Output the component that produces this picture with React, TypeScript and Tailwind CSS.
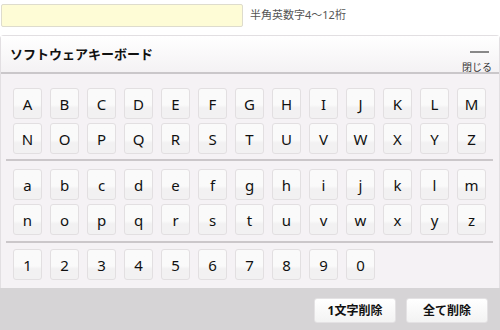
import React from 'react';

const upperRows = [
  ['A', 'B', 'C', 'D', 'E', 'F', 'G', 'H', 'I', 'J', 'K', 'L', 'M'],
  ['N', 'O', 'P', 'Q', 'R', 'S', 'T', 'U', 'V', 'W', 'X', 'Y', 'Z'],
];
const lowerRows = [
  ['a', 'b', 'c', 'd', 'e', 'f', 'g', 'h', 'i', 'j', 'k', 'l', 'm'],
  ['n', 'o', 'p', 'q', 'r', 's', 't', 'u', 'v', 'w', 'x', 'y', 'z'],
];
const numberRows = [['1', '2', '3', '4', '5', '6', '7', '8', '9', '0']];

const Key = ({ label }: { label: string }) => (
  <button className="w-[29px] h-[31px] rounded-[3px] border border-[#e2dfe1] bg-gradient-to-b from-[#fafafa] from-55% to-[#f2f1f2] to-65% text-[15px] leading-none text-[#111] flex items-center justify-center pt-[2px]">
    {label}
  </button>
);

const KeyGroup = ({ rows }: { rows: string[][] }) => (
  <div className="flex flex-col gap-[4px] pl-[12px]">
    {rows.map((row, i) => (
      <div key={i} className="flex gap-[8px]">
        {row.map(k => <Key key={k} label={k} />)}
      </div>
    ))}
  </div>
);

const Divider = () => <div className="ml-[5px] mr-[6px] h-[2px] bg-[#cbc7ca]" />;

const App = () => {
  return (
    <div
      className="w-[500px] h-[330px] bg-white overflow-hidden"
      style={{ fontFamily: '"Noto Sans", "Noto Sans CJK JP", sans-serif' }}
    >
      {/* input row */}
      <div className="flex items-center pt-[4px]">
        <input
          className="ml-[1px] w-[242px] h-[23px] bg-[#fefcd6] border border-[#dedccd] rounded-[2px] outline-none"
          readOnly
        />
        <span className="ml-[7px] text-[11px] text-[#555]">半角英数字4～12桁</span>
      </div>

      {/* keyboard panel */}
      <div className="mt-[8px] border-l border-r border-t border-[#e2dfe2] rounded-t-[4px]">
        <div className="h-[38px] flex items-center justify-between bg-gradient-to-b from-white to-[#f4f2f4] border-b-2 border-[#cac7ca] pl-[9px] pr-[7px]">
          <span className="text-[13px] font-bold text-[#111] mt-[1px]">ソフトウェアキーボード</span>
          <div className="self-start flex flex-col items-end pt-[15px]">
            <div className="w-[19px] h-[2px] bg-[#888] mr-[3px]" />
            <span className="text-[10px] leading-none mt-[9px] text-[#333]">閉じる</span>
          </div>
        </div>

        <div className="bg-[#f5f2f5] pt-[14px] pb-[8px]">
          <KeyGroup rows={upperRows} />
          <div className="mt-[5px]"><Divider /></div>
          <div className="mt-[8px]"><KeyGroup rows={lowerRows} /></div>
          <div className="mt-[6px]"><Divider /></div>
          <div className="mt-[6px]"><KeyGroup rows={numberRows} /></div>
        </div>
      </div>

      {/* footer */}
      <div className="h-[43px] bg-[#d6d4d6] flex justify-end gap-[10px] pt-[10px] pr-[12px]">
        <button className="w-[82px] h-[25px] rounded-[3px] border border-[#e4e2e4] bg-gradient-to-b from-white to-[#f3f3f3] text-[12px] font-bold text-[#111]">
          1文字削除
        </button>
        <button className="w-[82px] h-[25px] rounded-[3px] border border-[#e4e2e4] bg-gradient-to-b from-white to-[#f3f3f3] text-[12px] font-bold text-[#111]">
          全て削除
        </button>
      </div>
    </div>
  );
};

export default App;
